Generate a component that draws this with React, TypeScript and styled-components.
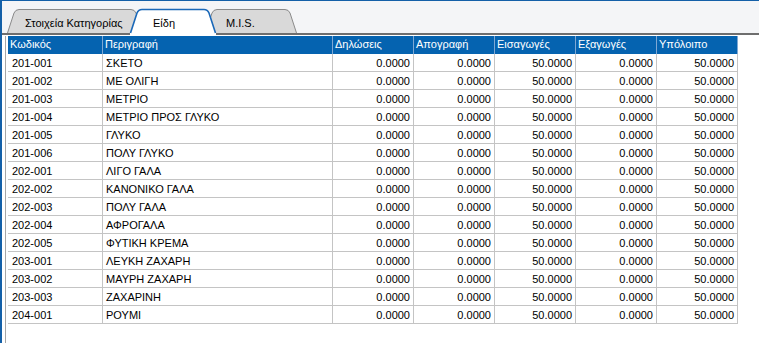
import React from "react";
import styled, { createGlobalStyle } from "styled-components";

const Global = createGlobalStyle`
  html, body { margin: 0; padding: 0; background: #ffffff; }
  body { font-family: "Liberation Sans", Arial, sans-serif; font-size: 11px; color: #000; }
`;

const Window = styled.div`
  width: 759px;
  height: 343px;
  box-sizing: border-box;
  border-top: 1px solid #1460a8;
  border-left: 2px solid #1460a8;
  display: flex;
  flex-direction: column;
  background: #ffffff;
  overflow: hidden;
`;

const TabStrip = styled.div`
  height: 32px;
  flex: none;
  background: #f4f5f7;
  border-bottom: 2px solid #6e6e6e;
  display: flex;
  align-items: flex-end;
  padding-left: 5px;
`;

const TabBox = styled.div<{ $w: number; $ml: number; $sel?: boolean }>`
  position: relative;
  width: ${(p) => p.$w}px;
  height: ${(p) => (p.$sel ? 26 : 24)}px;
  margin-left: ${(p) => p.$ml}px;
  margin-bottom: ${(p) => (p.$sel ? -2 : 0)}px;
  z-index: ${(p) => (p.$sel ? 2 : 1)};
  flex: none;
`;

const TabShape = styled.svg`
  position: absolute;
  left: 0;
  top: 0;
  overflow: visible;
`;

const TabLabel = styled.span<{ $pl: number }>`
  position: relative;
  display: block;
  padding-left: ${(p) => p.$pl}px;
  padding-top: 8px;
  line-height: 13px;
  font-size: 11px;
  color: #000;
  white-space: nowrap;
`;

function Tab({ label, w, ml, pl, sel }: { label: string; w: number; ml: number; pl: number; sel?: boolean }) {
  const h = 24;
  const d = `M0.5,${h} L7,4 Q8.5,0.5 12,0.5 L${w - 12},0.5 Q${w - 8.5},0.5 ${w - 7},4 L${w - 0.5},${h}`;
  return (
    <TabBox $w={w} $ml={ml} $sel={sel}>
      <TabShape width={w} height={sel ? 26 : 24} viewBox={`0 0 ${w} ${sel ? 26 : 24}`}>
        {sel && <rect x={0} y={h - 1} width={w} height={3} fill="#ffffff" />}
        <path
          d={d}
          fill={sel ? "#ffffff" : "#d9d9d9"}
          stroke={sel ? "#1a68b8" : "#8a8a8a"}
          strokeWidth={sel ? 1.6 : 1}
        />
      </TabShape>
      <TabLabel $pl={pl}>{label}</TabLabel>
    </TabBox>
  );
}

const Body = styled.div`
  flex: 1;
  display: flex;
  padding-left: 3px;
  padding-top: 1px;
`;

const GridPanel = styled.div`
  flex: 1;
  border-left: 1px solid #a6a6a6;
  padding-left: 2px;
`;

const Grid = styled.div`
  display: grid;
  grid-template-columns: 95px 230px 81px 81px 81px 81px 81px;
  width: 730px;
`;

const HeadCell = styled.div`
  height: 18px;
  box-sizing: border-box;
  background: #0563b0;
  color: #ffffff;
  border-right: 1px solid #7fa8d4;
  padding-left: 2px;
  line-height: 17px;
  white-space: nowrap;
  overflow: hidden;
`;

const Cell = styled.div<{ $num?: boolean; $pl?: number }>`
  height: 18px;
  box-sizing: border-box;
  border-right: 1px solid #c4c4c4;
  border-bottom: 1px solid #c4c4c4;
  line-height: 18px;
  padding-left: ${(p) => (p.$pl ?? 3)}px;
  padding-right: 3px;
  text-align: ${(p) => (p.$num ? "right" : "left")};
  white-space: nowrap;
  overflow: hidden;
  color: #000;
`;

const headers = ["Κωδικός", "Περιγραφή", "Δηλώσεις", "Απογραφή", "Εισαγωγές", "Εξαγωγές", "Υπόλοιπο"];

const rows: [string, string][] = [
  ["201-001", "ΣΚΕΤΟ"],
  ["201-002", "ΜΕ ΟΛΙΓΗ"],
  ["201-003", "ΜΕΤΡΙΟ"],
  ["201-004", "ΜΕΤΡΙΟ ΠΡΟΣ ΓΛΥΚΟ"],
  ["201-005", "ΓΛΥΚΟ"],
  ["201-006", "ΠΟΛΥ ΓΛΥΚΟ"],
  ["202-001", "ΛΙΓΟ ΓΑΛΑ"],
  ["202-002", "ΚΑΝΟΝΙΚΟ ΓΑΛΑ"],
  ["202-003", "ΠΟΛΥ ΓΑΛΑ"],
  ["202-004", "ΑΦΡΟΓΑΛΑ"],
  ["202-005", "ΦΥΤΙΚΗ ΚΡΕΜΑ"],
  ["203-001", "ΛΕΥΚΗ ΖΑΧΑΡΗ"],
  ["203-002", "ΜΑΥΡΗ ΖΑΧΑΡΗ"],
  ["203-003", "ΖΑΧΑΡΙΝΗ"],
  ["204-001", "ΡΟΥΜΙ"],
];

const nums = ["0.0000", "0.0000", "50.0000", "0.0000", "50.0000"];

export default function App() {
  return (
    <>
      <Global />
      <Window>
        <TabStrip>
          <Tab label="Στοιχεία Κατηγορίας" w={136} ml={0} pl={18} />
          <Tab label="Είδη" w={86} ml={-13} pl={23} sel />
          <Tab label="M.I.S." w={92} ml={-11} pl={21} />
        </TabStrip>
        <Body>
          <GridPanel>
            <Grid>
              {headers.map((h) => (
                <HeadCell key={h}>{h}</HeadCell>
              ))}
              {rows.map(([code, desc]) => (
                <React.Fragment key={code}>
                  <Cell $pl={4}>{code}</Cell>
                  <Cell>{desc}</Cell>
                  {nums.map((n, i) => (
                    <Cell key={i} $num>
                      {n}
                    </Cell>
                  ))}
                </React.Fragment>
              ))}
            </Grid>
          </GridPanel>
        </Body>
      </Window>
    </>
  );
}
